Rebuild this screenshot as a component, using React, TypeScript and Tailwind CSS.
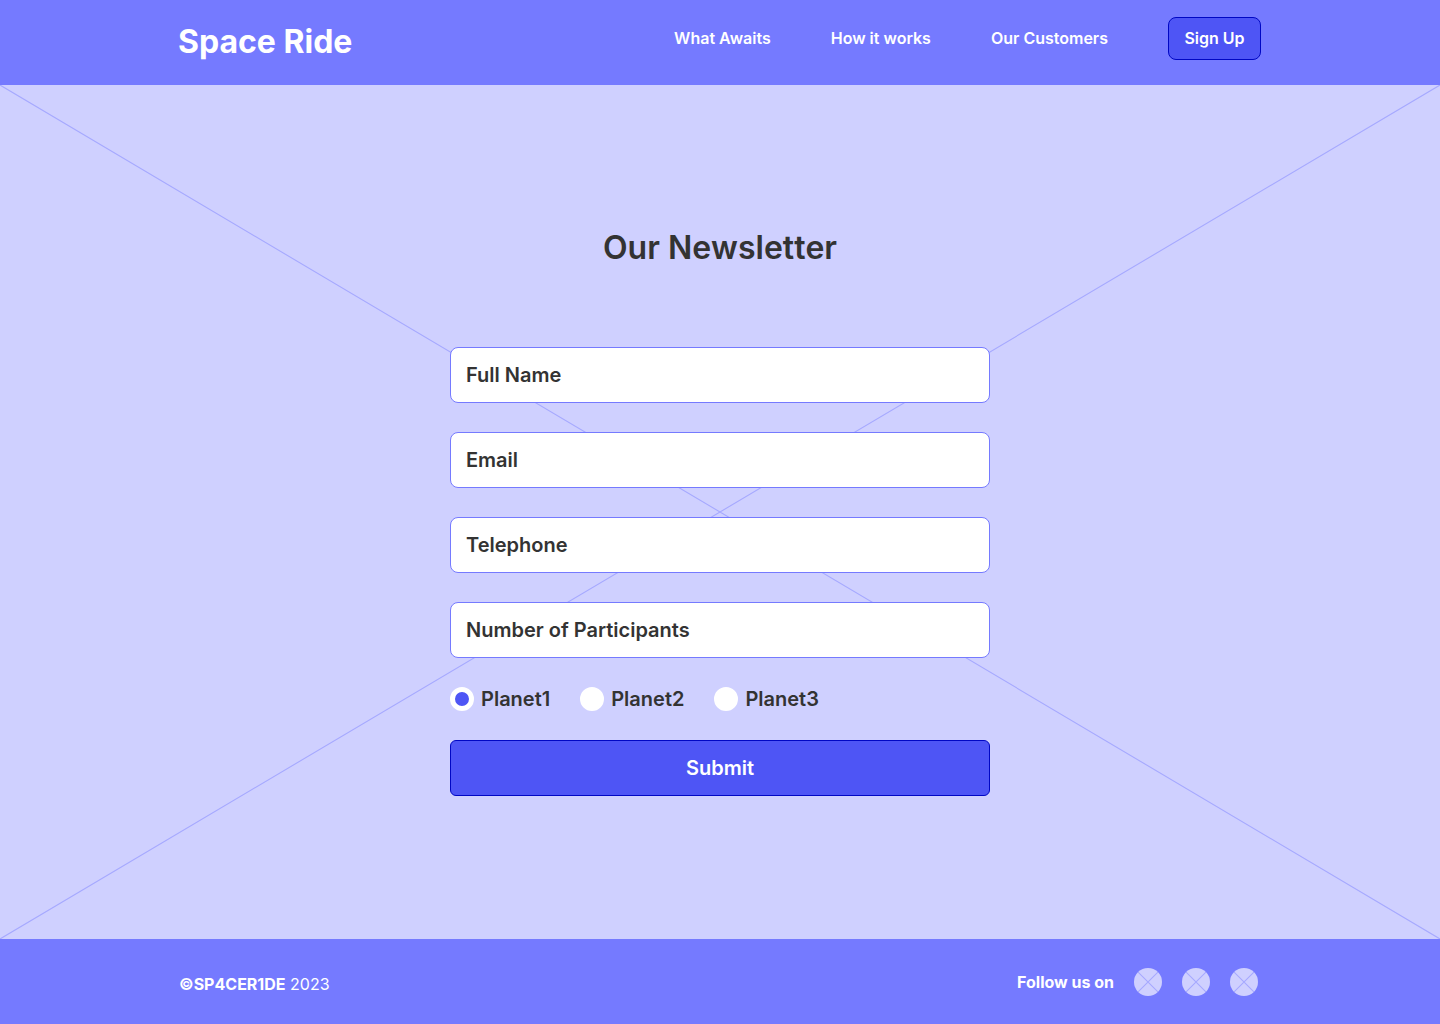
import React from "react";

const fields = [
  { id: "name", label: "Full Name", type: "text" },
  { id: "email", label: "Email", type: "email" },
  { id: "phone", label: "Telephone", type: "tel" },
  { id: "participants", label: "Number of Participants", type: "text" },
];

const links = ["What Awaits", "How it works", "Our Customers"];

const planets = ["Planet1", "Planet2", "Planet3"];

function SocialIcon() {
  return (
    <svg viewBox="0 0 28 28" className="size-7" aria-hidden="true">
      <circle cx="14" cy="14" r="14" fill="#cfd0ff" />
      <path d="M4.1 4.1 23.9 23.9M23.9 4.1 4.1 23.9" stroke="#a6a9ff" strokeWidth="1.1" />
    </svg>
  );
}

export default function App() {
  return (
    <div className="flex min-h-screen flex-col bg-[#cfd0ff] font-['Inter',sans-serif] text-[#333333]">
      <header className="bg-[#757aff] text-white">
        <div className="mx-auto flex h-[85px] max-w-[1084px] items-start justify-between pt-4 pr-px">
          <a href="#" className="pt-1 text-[32px] leading-11 font-bold">
            Space Ride
          </a>
          <nav className="flex items-start gap-15 pt-px font-semibold">
            {links.map((link) => (
              <a key={link} href="#" className="leading-[42px]">
                {link}
              </a>
            ))}
            <button className="h-[43px] min-w-[93px] rounded-lg border border-[#0007c4] bg-[#4e55f5] pb-px">
              Sign Up
            </button>
          </nav>
        </div>
      </header>

      <main className="relative flex flex-1 flex-col items-center pt-[139px] pb-[143px]">
        <svg
          className="absolute inset-0 size-full"
          viewBox="0 0 1440 854"
          preserveAspectRatio="none"
          aria-hidden="true"
        >
          <path
            d="M0 0 1440 854M1440 0 0 854"
            stroke="#a6a9ff"
            strokeWidth="1.1"
            vectorEffect="non-scaling-stroke"
          />
        </svg>
        <h1 className="relative text-[32px] leading-12 font-semibold [font-kerning:none]">
          Our Newsletter
        </h1>
        <form className="relative mt-[75px] w-full max-w-[540px]" onSubmit={(e) => e.preventDefault()}>
          <div className="flex flex-col gap-[29px]">
            {fields.map((f) => (
              <input
                key={f.id}
                id={f.id}
                type={f.type}
                aria-label={f.label}
                placeholder={f.label}
                className="h-14 w-full rounded-lg border border-[#757aff] bg-white px-[15px] text-xl font-semibold placeholder:text-[#333333]"
              />
            ))}
          </div>
          <div className="mt-[26px] flex gap-[30px] text-xl font-semibold [font-kerning:none]">
            {planets.map((p, i) => (
              <label key={p} className="flex h-[30px] items-center gap-[7px]">
                <input
                  type="radio"
                  name="planet"
                  defaultChecked={i === 0}
                  className="size-6 appearance-none rounded-full border-5 border-white bg-white checked:bg-[#4e55f5]"
                />
                {p}
              </label>
            ))}
          </div>
          <button className="mt-[26px] h-14 w-full rounded-md border border-[#0007c4] bg-[#4e55f5] text-xl font-semibold text-white">
            Submit
          </button>
        </form>
      </main>

      <footer className="bg-[#757aff] text-white">
        <div className="mx-auto flex h-[85px] max-w-[1082px] items-center justify-between">
          <p className="pt-1 [font-kerning:none]">
            <strong className="font-bold">©SP4CER1DE</strong> 2023
          </p>
          <div className="flex items-center gap-5 pr-[3px] font-bold">
            <span>Follow us on</span>
            {["First", "Second", "Third"].map((n) => (
              <a key={n} href="#" aria-label={n + " social profile"}>
                <SocialIcon />
              </a>
            ))}
          </div>
        </div>
      </footer>
    </div>
  );
}
